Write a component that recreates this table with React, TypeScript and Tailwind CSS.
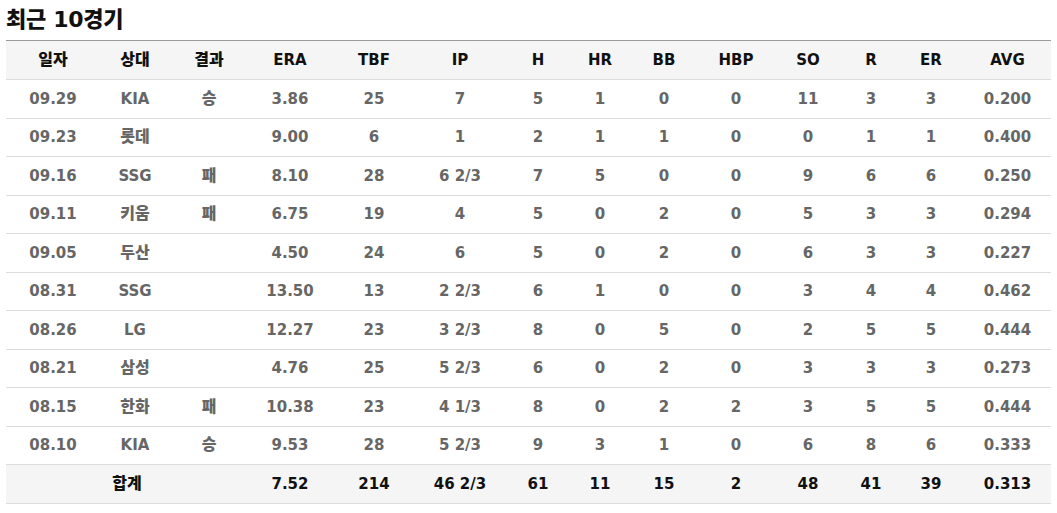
const columns = ["일자", "상대", "결과", "ERA", "TBF", "IP", "H", "HR", "BB", "HBP", "SO", "R", "ER", "AVG"];

const games = [
  ["09.29", "KIA", "승", "3.86", "25", "7", "5", "1", "0", "0", "11", "3", "3", "0.200"],
  ["09.23", "롯데", "", "9.00", "6", "1", "2", "1", "1", "0", "0", "1", "1", "0.400"],
  ["09.16", "SSG", "패", "8.10", "28", "6 2/3", "7", "5", "0", "0", "9", "6", "6", "0.250"],
  ["09.11", "키움", "패", "6.75", "19", "4", "5", "0", "2", "0", "5", "3", "3", "0.294"],
  ["09.05", "두산", "", "4.50", "24", "6", "5", "0", "2", "0", "6", "3", "3", "0.227"],
  ["08.31", "SSG", "", "13.50", "13", "2 2/3", "6", "1", "0", "0", "3", "4", "4", "0.462"],
  ["08.26", "LG", "", "12.27", "23", "3 2/3", "8", "0", "5", "0", "2", "5", "5", "0.444"],
  ["08.21", "삼성", "", "4.76", "25", "5 2/3", "6", "0", "2", "0", "3", "3", "3", "0.273"],
  ["08.15", "한화", "패", "10.38", "23", "4 1/3", "8", "0", "2", "2", "3", "5", "5", "0.444"],
  ["08.10", "KIA", "승", "9.53", "28", "5 2/3", "9", "3", "1", "0", "6", "8", "6", "0.333"],
];

const total = ["7.52", "214", "46 2/3", "61", "11", "15", "2", "48", "41", "39", "0.313"];

const grid =
  "grid grid-cols-[94px_70px_78px_84px_84px_88px_68px_56px_72px_72px_72px_54px_66px_87px] items-center text-center";

// hangul cells read a touch larger than the latin digits
const isKo = (s: string) => /[가-힣]/.test(s);

export default function App() {
  return (
    <div
      className="w-[1057px] h-[513px] bg-white px-[6px] pt-[5px]"
      style={{ fontFamily: '"DejaVu Sans", "Noto Sans CJK KR", sans-serif' }}
    >
      <h2 className="text-[22px] font-black text-[#111] leading-[29px] mb-[6px] tracking-[-0.3px]">
        최근 10경기
      </h2>

      <div className="w-[1045px] border-t border-[#9a9a9a]">
        <div className={`${grid} h-[39px] bg-[#f5f5f5] border-b border-[#dcdcdc] text-[15px] font-black text-[#111]`}>
          {columns.map((c) => (
            <div key={c} className={isKo(c) ? "text-[16px]" : ""}>
              {c}
            </div>
          ))}
        </div>

        {games.map((row, i) => (
          <div
            key={i}
            className={`${grid} h-[38.5px] border-b border-[#dcdcdc] text-[15px] font-black text-[#666]`}
          >
            {row.map((cell, j) => (
              <div key={j} className={isKo(cell) ? "text-[16px]" : ""}>
                {cell}
              </div>
            ))}
          </div>
        ))}

        <div className={`${grid} h-[38.5px] bg-[#f5f5f5] border-b border-[#dcdcdc] text-[15px] font-black text-[#111]`}>
          <div className="col-span-3 text-[16px]">합계</div>
          {total.map((cell, j) => (
            <div key={j}>{cell}</div>
          ))}
        </div>
      </div>
    </div>
  );
}
